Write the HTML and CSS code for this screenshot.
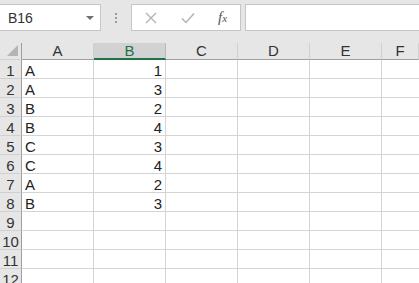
FILE: index.html
```html
<!DOCTYPE html>
<html lang="zh-CN">
<head>
  <meta charset="UTF-8" />
  <title>Sheet1</title>
  <link rel="stylesheet" href="styles.css">
</head>
<body>
  <div class="formula-bar">
    <div class="name-box">
      <span>B16</span>
      <span class="caret"></span>
    </div>
    <div class="dots"><i></i><i></i><i></i></div>
    <div class="buttons">
      <svg class="btn" width="14" height="14" viewBox="0 0 14 14"><path d="M2 2 L12 12 M12 2 L2 12" stroke="#b3b3b3" stroke-width="1.4" fill="none"/></svg>
      <svg class="btn" width="16" height="14" viewBox="0 0 16 14"><path d="M2 7.5 L6 11.5 L14 2.5" stroke="#b3b3b3" stroke-width="1.5" fill="none"/></svg>
      <span class="fx">f<small>x</small></span>
    </div>
    <div class="formula-input"></div>
  </div>

  <div class="sheet">
    <div class="row head">
      <div class="cell corner"><span class="tri"></span></div>
      <div class="cell col">A</div>
      <div class="cell col selected">B</div>
      <div class="cell col">C</div>
      <div class="cell col">D</div>
      <div class="cell col">E</div>
      <div class="cell col last">F</div>
    </div>
  </div>

  <script>
    var data = [["A",1],["A",3],["B",2],["B",4],["C",3],["C",4],["A",2],["B",3]];
    var sheet = document.querySelector(".sheet");
    for (var i = 1; i <= 12; i++) {
      var row = document.createElement("div");
      row.className = "row";
      var d = data[i - 1] || ["", ""];
      row.innerHTML =
        '<div class="cell num">' + i + '</div>' +
        '<div class="cell">' + d[0] + '</div>' +
        '<div class="cell right">' + d[1] + '</div>' +
        '<div class="cell"></div><div class="cell"></div><div class="cell"></div>' +
        '<div class="cell last"></div>';
      sheet.appendChild(row);
    }
  </script>
</body>
</html>
```

FILE: styles.css
```css
body {
  margin: 0;
  font-family: "Liberation Sans", "Noto Sans CJK SC", sans-serif;
  background: #fff;
  color: #222;
  overflow: hidden;
}
.formula-bar {
  display: flex;
  align-items: flex-start;
  height: 43px;
  padding-top: 4px;
  box-sizing: border-box;
  background: #e6e6e6;
}
.name-box {
  width: 101px;
  height: 27px;
  box-sizing: border-box;
  background: #fff;
  border: 1px solid #c6c6c6;
  border-left: none;
  display: flex;
  align-items: center;
  justify-content: space-between;
  padding: 0 6px 0 8px;
  font-size: 14px;
  color: #333;
}
.caret {
  width: 0;
  height: 0;
  border-left: 4px solid transparent;
  border-right: 4px solid transparent;
  border-top: 4px solid #707070;
}
.dots {
  width: 30px;
  height: 27px;
  display: flex;
  flex-direction: column;
  align-items: center;
  justify-content: center;
  gap: 2px;
}
.dots i {
  width: 2px;
  height: 2px;
  background: #9a9a9a;
}
.buttons {
  width: 110px;
  height: 27px;
  box-sizing: border-box;
  background: #fff;
  border: 1px solid #c6c6c6;
  display: flex;
  align-items: center;
  padding-left: 12px;
  gap: 22px;
}
.fx {
  font-family: "Liberation Serif", serif;
  font-style: italic;
  font-size: 15px;
  color: #555;
}
.fx small {
  font-size: 11px;
}
.formula-input {
  flex: 1;
  height: 27px;
  margin-left: 4px;
  box-sizing: border-box;
  background: #fff;
  border: 1px solid #c6c6c6;
  border-right: none;
}
.sheet {
  display: flex;
  flex-direction: column;
}
.row {
  display: flex;
  height: 19px;
}
.cell {
  width: 72px;
  flex: none;
  box-sizing: border-box;
  border-right: 1px solid #d4d4d4;
  border-bottom: 1px solid #d4d4d4;
  font-size: 15px;
  line-height: 17px;
  padding: 2px 3px 0;
  white-space: nowrap;
  overflow: hidden;
}
.cell.last {
  flex: 1;
  border-right: none;
}
.cell.right {
  text-align: right;
}
.row.head {
  height: 17px;
}
.head .cell {
  background: #e6e6e6;
  border-right: 1px solid #d0d0d0;
  border-bottom: 1px solid #9e9e9e;
  text-align: center;
  line-height: 16px;
  padding-top: 0;
  color: #333;
}
.head .cell.selected {
  background: #d2d2d2;
  color: #217346;
  border-bottom: 2px solid #217346;
  border-right-color: #b8b8b8;
}
.cell.corner,
.cell.num {
  width: 22px;
  padding: 2px 0 0;
  background: #e6e6e6;
  border-right: 1px solid #9e9e9e;
  border-bottom: 1px solid #d0d0d0;
  text-align: center;
  color: #333;
  font-size: 15px;
}
.head .cell.corner {
  border-right: 1px solid #9e9e9e;
  padding: 0;
  position: relative;
}
.tri {
  position: absolute;
  right: 3px;
  bottom: 3px;
  width: 0;
  height: 0;
  border-left: 11px solid transparent;
  border-bottom: 11px solid #b4b4b4;
}
```
